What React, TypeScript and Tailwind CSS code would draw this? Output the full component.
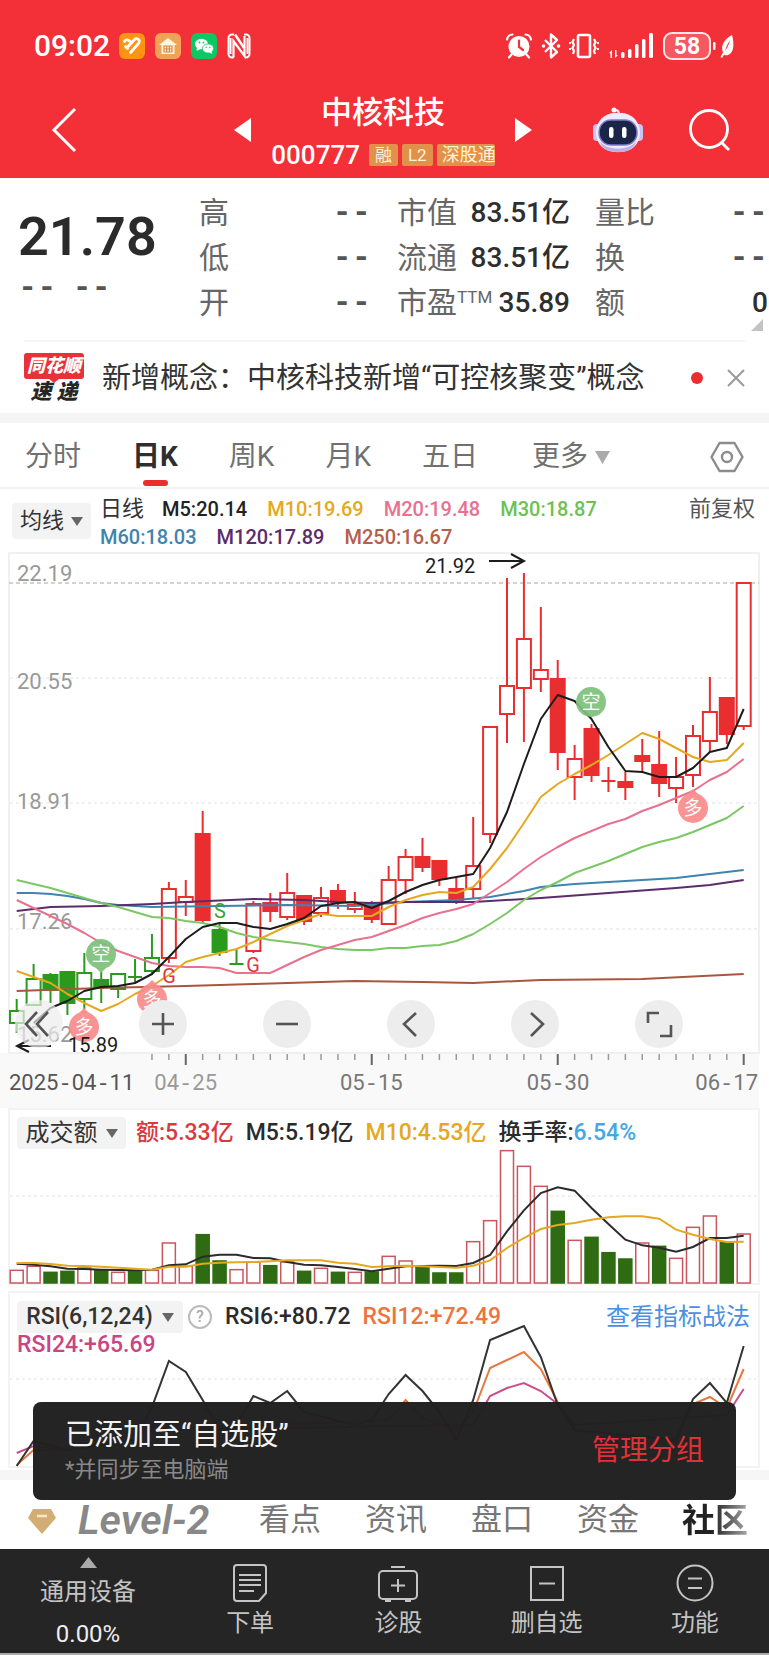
import type { ReactNode } from "react";

const PITCH = 16.907;
const xAt = (i: number) => 16.7 + PITCH * i;

const RED = "#ea2e30";
const GREEN = "#2a9a1c";

type Candle = [kind: string, high: number, top: number, bottom: number, low: number];

// kind: first letter is the colour, second is h(ollow), f(illed) or x (cross)
const candles: Candle[] = [
  ["gh", 999, 1011, 1023, 1033], ["gh", 964, 979, 1005, 1005], ["gf", 973, 975, 990, 1003],
  ["gf", 972, 972, 1003, 1015], ["gh", 953, 973, 999, 1009], ["gf", 972, 980, 987, 1003],
  ["gh", 974, 974, 989, 998], ["gx", 959, 977, 977, 982], ["gh", 934, 958, 971, 975],
  ["rh", 882, 889, 958, 963], ["rh", 880, 897, 902, 916], ["rf", 811, 834, 920, 923],
  ["gf", 923, 930, 952, 956], ["gx", 949, 964, 964, 964], ["rh", 901, 904, 951, 953],
  ["rf", 893, 903, 911, 922], ["rh", 873, 893, 917, 920], ["rf", 896, 896, 921, 925],
  ["rh", 887, 898, 913, 917], ["rf", 884, 891, 902, 909], ["rh", 892, 905, 909, 913],
  ["rf", 901, 903, 919, 923], ["rh", 866, 880, 924, 924], ["rh", 849, 857, 880, 894],
  ["rf", 838, 857, 867, 872], ["rf", 861, 861, 879, 886], ["rf", 877, 889, 901, 904],
  ["rh", 817, 866, 889, 898], ["rh", 727, 727, 834, 843], ["rh", 578, 686, 714, 743],
  ["rh", 573, 639, 688, 742], ["rh", 607, 670, 679, 692], ["rf", 660, 679, 752, 770],
  ["rh", 745, 759, 777, 800], ["rf", 724, 729, 775, 782], ["rx", 767, 781, 781, 792],
  ["rf", 772, 782, 787, 800], ["rf", 739, 756, 761, 772], ["rf", 731, 765, 783, 797],
  ["rh", 757, 777, 788, 803], ["rh", 725, 736, 775, 787], ["rh", 677, 712, 741, 752],
  ["rf", 698, 698, 734, 744], ["rh", 583, 583, 726, 730],
];

const dense = (start: number, ys: number[]): [number, number][] => ys.map((y, k) => [start + k, y]);

const averages: { color: string; points: [number, number][] }[] = [
  { color: "#a9563f", points: [[0, 991], [5, 988], [10, 986], [14, 984], [20, 981], [24, 982], [27, 983], [31, 980], [37, 979], [43, 974]] },
  { color: "#3f84ae", points: [[0, 893], [1, 893], [2, 894], [3, 896], [4, 899], [5, 903], [6, 905], [8, 907], [12, 906], [16, 905], [20, 906], [23, 902], [26, 900], [28, 897], [29, 894], [30, 891], [31, 887], [33, 884], [36, 881], [38, 879], [39, 878], [41, 874], [42, 872], [43, 870]] },
  { color: "#5d2c6b", points: [[0, 911], [2, 907], [5, 906], [8, 904], [10, 902], [14, 899], [17, 900], [19, 902], [21, 903], [23, 902], [25, 902], [27, 902], [31, 898], [35, 893], [39, 888], [41, 885], [43, 880]] },
  { color: "#7cc664", points: dense(0, [880, 884, 888, 893, 898, 903, 907, 912, 917, 918, 921, 923, 927, 933, 937, 940, 942, 944, 947, 949, 950, 950, 948, 948, 946, 945, 941, 934, 924, 913, 900, 890, 882, 873, 867, 861, 854, 847, 842, 838, 832, 825, 818, 806]) },
  { color: "#e8718f", points: dense(0, [900, 908, 916, 924, 933, 943, 951, 957, 963, 966, 967, 967, 968, 973, 973, 973, 965, 957, 950, 945, 940, 937, 931, 925, 918, 913, 909, 904, 893, 882, 869, 857, 847, 838, 831, 824, 819, 811, 805, 798, 791, 780, 772, 759]) },
  { color: "#e5a821", points: dense(0, [971, 977, 983, 994, 1003, 1011, 1004, 994, 986, 975, 962, 957, 953, 949, 942, 934, 926, 920, 914, 916, 916, 916, 907, 900, 895, 892, 893, 887, 869, 848, 823, 797, 784, 774, 765, 755, 744, 733, 739, 748, 757, 762, 760, 743]) },
  { color: "#1c1c1c", points: dense(1, [1023, 1008, 1001, 991, 987, 986, 983, 974, 957, 939, 927, 923, 923, 927, 929, 924, 918, 906, 903, 902, 908, 901, 892, 885, 880, 877, 874, 848, 812, 764, 719, 695, 701, 719, 747, 771, 772, 777, 777, 768, 752, 748, 709]) },
];

const volumes: [string, number][] = [
  ["r", 512], ["r", 500], ["g", 518], ["g", 515], ["r", 505], ["g", 512], ["r", 518], ["g", 515], ["r", 512], ["r", 430], ["r", 500],
  ["g", 405], ["g", 484], ["r", 510], ["r", 487], ["g", 498], ["r", 487], ["g", 515], ["r", 506], ["g", 518], ["r", 518], ["g", 517],
  ["r", 470], ["r", 484], ["g", 502], ["g", 520], ["g", 520], ["r", 426], ["r", 363], ["r", 153], ["r", 200], ["r", 260], ["g", 335],
  ["r", 422], ["g", 413], ["g", 459], ["g", 478], ["r", 430], ["g", 440], ["r", 476], ["r", 383], ["r", 349], ["g", 428], ["r", 403],
];
const volumeM5 = [492, 495, 500, 507, 508, 510, 511, 512, 510, 497, 494, 471, 465, 465, 475, 476, 487, 495, 497, 502, 508, 515, 507, 500, 499, 498, 499, 490, 466, 395, 332, 280, 263, 273, 325, 373, 420, 437, 444, 456, 442, 415, 415, 408];
const volumeM10 = [490, 490, 493, 498, 499, 501, 504, 507, 510, 501, 501, 492, 489, 488, 487, 485, 482, 482, 482, 489, 492, 502, 500, 498, 500, 502, 504, 498, 482, 445, 415, 388, 376, 370, 360, 353, 350, 350, 357, 390, 405, 418, 427, 426];
const volY = (v: number) => (v - 25) / 3;

const rsi: { color: string; points: [number, number][] }[] = [
  { color: "#c94f8c", points: [[0, 1453], [1, 1446], [3, 1450], [8, 1430], [27, 1425], [28, 1396], [29, 1388], [30, 1383], [31, 1391], [32, 1404], [33, 1425], [42, 1415], [43, 1389]] },
  { color: "#e5793f", points: [[0, 1465], [1, 1450], [3, 1450], [8, 1430], [22, 1420], [23, 1400], [24, 1418], [26, 1430], [27, 1412], [28, 1368], [29, 1360], [30, 1352], [31, 1369], [32, 1402], [33, 1430], [39, 1440], [40, 1404], [41, 1397], [42, 1408], [43, 1369]] },
  { color: "#333333", points: [[0, 1466], [1, 1441], [3, 1450], [7, 1440], [8, 1407], [9, 1361], [10, 1372], [11, 1400], [12, 1430], [13, 1425], [14, 1396], [15, 1403], [16, 1391], [17, 1412], [20, 1425], [21, 1420], [22, 1394], [23, 1375], [24, 1391], [25, 1412], [26, 1440], [27, 1400], [28, 1340], [29, 1333], [30, 1326], [31, 1357], [32, 1405], [33, 1430], [39, 1440], [40, 1399], [41, 1383], [42, 1403], [43, 1346]] },
];

const toPoints = (pts: [number, number][]) => pts.map(([i, y]) => `${xAt(i).toFixed(1)},${y}`).join(" ");

function Dashed({ children }: { children: string }) {
  return (
    <>
      {children.split(/(-)/).map((part, i) =>
        part === "-" ? <span key={i} className="font-['Liberation_Mono']">-</span> : part,
      )}
    </>
  );
}

function StatusBar() {
  return (
    <div className="flex h-[92px] items-center pr-[34px] pl-[34px] text-white">
      <span className="text-[30px] leading-none font-medium">09:02</span>
      <div className="ml-[9px] flex items-center gap-[10px]">
        <svg width="26" height="26" viewBox="0 0 26 26">
          <rect width="26" height="26" rx="6" fill="#ff9413" />
          <path d="M5.500 8.500a3 3 0 0 1 4.500-1l2.500 2.500M6.500 13.500l2 2M11.500 19.500l8-9a2.800 2.800 0 0 0-4-4l-7 7.500" fill="none" stroke="#fff" strokeWidth="2.800" strokeLinecap="round" />
        </svg>
        <svg width="26" height="26" viewBox="0 0 26 26">
          <rect width="26" height="26" rx="6" fill="#f0a354" />
          <path d="M13 5l9 7h-2.500v9h-13v-9H4z" fill="#fff5e0" />
          <path d="M9 13h8v6H9zM11.700 13v6M14.400 13v6M9 16h8" fill="none" stroke="#d9893c" strokeWidth="1.200" />
        </svg>
        <svg width="26" height="26" viewBox="0 0 26 26">
          <rect width="26" height="26" rx="6" fill="#0cc863" />
          <ellipse cx="10.500" cy="11" rx="6.500" ry="5.300" fill="#fff" />
          <path d="M6 14l-.5 4 4-2z" fill="#fff" />
          <ellipse cx="17" cy="15.500" rx="5.600" ry="4.600" fill="#fff" stroke="#0cc863" strokeWidth=".8" />
          <path d="M18 19l3 2-.5-3z" fill="#fff" />
          <g fill="#0cc863"><circle cx="8.500" cy="9.500" r=".9" /><circle cx="12.500" cy="9.500" r=".9" /><circle cx="15.200" cy="14.500" r=".7" /><circle cx="18.800" cy="14.500" r=".7" /></g>
        </svg>
        <svg width="24" height="26" viewBox="0 0 24 26" fill="none" stroke="#fff">
          <path d="M7 1.500H5a3.500 3.500 0 0 0-3.500 3.500v16A3.500 3.500 0 0 0 5 24.500h1.500M17 1.500h2A3.500 3.500 0 0 1 22.500 5v16a3.500 3.500 0 0 1-3.500 3.500h-1" strokeWidth="2" />
          <path d="M6.500 24.500V8l11 15V3" strokeWidth="2.200" />
          <path d="M8 1.500l9.500 14" strokeWidth="2.500" />
          <path d="M3.500 5v16M20.500 5v16" strokeWidth="2" />
        </svg>
      </div>
      <div className="ml-auto flex items-center">
        <svg width="28" height="28" viewBox="0 0 28 28">
          <circle cx="14" cy="14.500" r="10.500" fill="#fff" />
          <path d="M14 8.500v6.500l4 3" fill="none" stroke="#f32f38" strokeWidth="2.200" strokeLinecap="round" />
          <path d="M2 7.500C2.500 4.500 5 2.500 7.500 2.500M26 7.500C25.500 4.500 23 2.500 20.500 2.500M6.500 22.500L4 25.500M21.500 22.500l2.500 3" fill="none" stroke="#fff" strokeWidth="2.200" strokeLinecap="round" />
        </svg>
        <svg className="ml-2" width="20" height="28" viewBox="0 0 20 28">
          <path d="M4 8l12 12-6 5.500V2.500L16 8 4 20" fill="none" stroke="#fff" strokeWidth="2.400" strokeLinejoin="round" />
          <circle cx="2.500" cy="14" r="1.800" fill="#fff" /><circle cx="17.500" cy="14" r="1.800" fill="#fff" />
        </svg>
        <svg className="ml-2" width="30" height="28" viewBox="0 0 30 28" fill="none" stroke="#fff" strokeWidth="2.200">
          <rect x="9" y="3" width="12" height="22" rx="1.500" strokeWidth="2.600" />
          <path d="M5 7l-1.500 3L5 13l-1.500 3L5 19l-1 3M25 7l1.500 3L25 13l1.500 3L25 19l1 3M1 10v2M1 16v2M29 10v2M29 16v2" />
        </svg>
        <svg className="ml-[10px]" width="46" height="28" viewBox="0 0 46 28" fill="#fff">
          <path d="M0 21l3-3v8H1.500v-4.500zM6 18v8l3-3H7.500v-5z" />
          <rect x="12" y="20" width="3.500" height="6" rx="1.500" /><rect x="19" y="17" width="3.500" height="9" rx="1.500" /><rect x="26" y="12" width="3.500" height="14" rx="1.500" /><rect x="33" y="7" width="3.500" height="19" rx="1.500" /><rect x="40" y="1" width="4" height="25" rx="1.500" />
        </svg>
        <span className="ml-2 flex h-7 w-12 items-center justify-center rounded-[9px] border-2 border-white/85 bg-white/20 text-[23px] leading-none font-bold">58</span>
        <svg className="ml-[2px]" width="22" height="28" viewBox="0 0 22 28" fill="#fff">
          <rect x="0" y="10" width="2.500" height="8" rx="1.200" />
          <path d="M19 3c2.500 9 2 18-4 20-1.500.5-3 .3-4-.3L9 26l-1.500-1L10 20.500C7 13 12 7 19 3zM12 19c1.500-5 3-8 5-10.500-1 3.500-2.500 7-5 10.500z" fillRule="evenodd" />
        </svg>
      </div>
    </div>
  );
}

function Tag({ children }: { children: string }) {
  return <span className="rounded-[2px] bg-[#e2914a] px-[6px] py-px text-[17px] leading-5 text-[#fff3d9]">{children}</span>;
}

function TitleBar() {
  return (
    <div className="flex h-[86px] items-center pr-[38px] pb-[11px] pl-[50px] text-white">
      <button aria-label="返回">
        <svg width="28" height="46" viewBox="0 0 28 46" fill="none" stroke="#fff" strokeWidth="3"><path d="M25 2L4 23l21 21" /></svg>
      </button>
      <button aria-label="上一只" className="ml-[156px]">
        <svg width="17" height="24" viewBox="0 0 17 24"><path d="M17 0v24L0 12z" fill="#fff" /></svg>
      </button>
      <div className="flex flex-1 flex-col items-center pt-1">
        <h1 className="text-[31px] leading-9 font-medium">中核科技</h1>
        <div className="mt-[10px] flex items-center gap-1 whitespace-nowrap">
          <span className="mr-[5px] text-[26px] leading-7 font-medium">000777</span>
          <Tag>融</Tag>
          <Tag>L2</Tag>
          <span className="w-[58px] overflow-hidden rounded-[2px] bg-[#e2914a] py-px pl-[5px] text-[18px] leading-5 text-[#fff3d9]">深股通</span>
        </div>
      </div>
      <button aria-label="下一只">
        <svg width="17" height="24" viewBox="0 0 17 24"><path d="M0 0v24l17-12z" fill="#fff" /></svg>
      </button>
      <button aria-label="智能助手" className="ml-[61px]">
        <svg width="50" height="46" viewBox="0 0 50 46">
          <path d="M26 8c0-4-1-5-4-5" fill="none" stroke="#e9d9ff" strokeWidth="2.500" /><circle cx="21" cy="3" r="2.500" fill="#fff" />
          <rect x="0" y="17" width="8" height="17" rx="4" fill="#c9c4f3" /><rect x="42" y="17" width="8" height="17" rx="4" fill="#c9c4f3" />
          <rect x="3" y="6" width="44" height="39" rx="19" fill="#eeeaff" />
          <path d="M7 34c5 10 31 10 36 0-2 15-34 15-36 0z" fill="#b9b2ea" />
          <rect x="6" y="13" width="38" height="25" rx="12" fill="#1a2547" stroke="#7d7cc4" strokeWidth="1.500" />
          <rect x="16" y="20" width="4.500" height="11" rx="2.200" fill="#fff" /><rect x="29" y="20" width="4.500" height="11" rx="2.200" fill="#fff" />
        </svg>
      </button>
      <button aria-label="搜索" className="ml-[46px]">
        <svg width="42" height="44" viewBox="0 0 42 44" fill="none" stroke="#fff" strokeWidth="2.800"><circle cx="20" cy="21" r="18.500" /><path d="M32 34l8 8" /></svg>
      </button>
    </div>
  );
}

function StatRow({ label, children }: { label: ReactNode; children: string }) {
  return (
    <div className="flex h-[43px] items-center justify-between whitespace-nowrap">
      <dt className="text-[30px] text-[#666]">{label}</dt>
      {children === "--"
        ? <dd className="font-['Liberation_Mono'] text-[32px] font-bold text-[#555]">--</dd>
        : <dd className="text-[28px] font-medium text-[#2e2e2e]">{children}</dd>}
    </div>
  );
}

function Quote() {
  return (
    <section className="relative flex h-[162px] pt-[13px] leading-[43px]">
      <div className="w-[199px] shrink-0 pl-[18px]">
        <p className="mt-[18px] text-[54px] leading-[56px] font-semibold text-[#2b2b2b]">21.78</p>
        <p className="flex gap-4 font-['Liberation_Mono'] text-[32px] leading-[46px] font-bold text-[#555]">
          <span>--</span>
          <span>--</span>
        </p>
      </div>
      <dl className="flex w-[172px] shrink-0 flex-col gap-[2px]">
        <StatRow label="高">--</StatRow>
        <StatRow label="低">--</StatRow>
        <StatRow label="开">--</StatRow>
      </dl>
      <dl className="ml-[26px] flex w-[173px] shrink-0 flex-col gap-[2px]">
        <StatRow label="市值">83.51亿</StatRow>
        <StatRow label="流通">83.51亿</StatRow>
        <StatRow label={<span className="flex">市盈<sup className="top-0 text-[17px] leading-8">TTM</sup></span>}>35.89</StatRow>
      </dl>
      <dl className="ml-[25px] flex flex-1 flex-col gap-[2px] pr-px">
        <StatRow label="量比">--</StatRow>
        <StatRow label="换">--</StatRow>
        <StatRow label="额">0</StatRow>
      </dl>
      <svg className="absolute right-[6px] bottom-[9px]" width="12" height="12" viewBox="0 0 12 12"><path d="M12 0v12H0z" fill="#c4c4c4" /></svg>
    </section>
  );
}

function News() {
  return (
    <section className="mx-6 flex h-[73px] items-center border-t-2 border-[#f5f5f5]">
      <div className="w-[60px] text-center leading-none font-black italic">
        <div className="relative rounded-[3px] bg-[#e63238] py-[3px] text-[18px] leading-5 whitespace-nowrap text-white">
          同花顺
          <svg className="absolute -bottom-1 left-6" width="12" height="5" viewBox="0 0 12 5"><path d="M0 0h12L6 5z" fill="#e63238" /></svg>
        </div>
        <div className="mt-[3px] text-[21px] leading-[21px] text-[#262626]">速 递</div>
      </div>
      <a href="#news" className="ml-[18px] flex-1 pt-[2px] text-[29px] whitespace-nowrap text-[#333]">新增概念：中核科技新增“可控核聚变”概念</a>
      <span className="size-3 rounded-full bg-[#ea2e30]" />
      <button aria-label="关闭" className="ml-6">
        <svg width="18" height="18" viewBox="0 0 18 18" stroke="#999" strokeWidth="2"><path d="M1 1l16 16M17 1L1 17" /></svg>
      </button>
    </section>
  );
}

function PeriodTabs() {
  return (
    <nav className="flex h-[66px] items-center border-b-2 border-[#f3f3f3] pt-1 pr-[25px] pl-[25px] text-[28px] text-[#707070]">
      <button>分时</button>
      <button className="relative ml-[51px] font-bold text-[#2e2e2e]">
        日K
        <span className="absolute -bottom-[8px] left-[11px] h-[6px] w-[25px] rounded-[3px] bg-[#ea2e30]" />
      </button>
      <button className="ml-[51px]">周K</button>
      <button className="ml-[51px]">月K</button>
      <button className="ml-[51px]">五日</button>
      <button className="ml-[54px] flex items-center gap-[7px]">
        更多
        <svg width="15" height="13" viewBox="0 0 15 13"><path d="M0 0h15L7.500 13z" fill="#aaa" /></svg>
      </button>
      <button aria-label="设置" className="ml-auto">
        <svg width="34" height="32" viewBox="0 0 34 32" fill="none" stroke="#8c8c8c" strokeWidth="2.400" strokeLinejoin="round">
          <path d="M9.500 2h15L32.500 16l-8 14h-15l-8-14z" /><circle cx="17" cy="16" r="5" />
        </svg>
      </button>
    </nav>
  );
}

function Caret() {
  return <svg width="12" height="9" viewBox="0 0 12 9"><path d="M0 0h12L6 9z" fill="#666" /></svg>;
}

function AverageLegend() {
  return (
    <div className="flex h-[63px] pr-[14px] pl-3 text-[20px] leading-7 font-medium whitespace-nowrap">
      <button className="mt-[14px] flex h-9 w-[79px] items-center justify-center gap-[7px] rounded bg-[#f3f3f3] text-[22px] font-normal text-[#333]">均线<Caret /></button>
      <div className="ml-[9px] pt-[6px]">
        <div className="flex gap-5">
          <span className="-mr-[2px] text-[22px] font-normal text-[#333]">日线</span>
          <span className="text-[#222]">M5:20.14</span>
          <span className="text-[#e5a821]">M10:19.69</span>
          <span className="text-[#e8718f]">M20:19.48</span>
          <span className="text-[#6cc24f]">M30:18.87</span>
        </div>
        <div className="flex gap-5">
          <span className="text-[#3f84ae]">M60:18.03</span>
          <span className="text-[#5d2c6b]">M120:17.89</span>
          <span className="text-[#b5604a]">M250:16.67</span>
        </div>
      </div>
      <button className="ml-auto flex pt-[6px] text-[22px] font-normal text-[#555]">前复权</button>
    </div>
  );
}

function CandleMark({ index, candle }: { index: number; candle: Candle }) {
  const [kind, high, top, bottom, low] = candle;
  const x = xAt(index);
  const color = kind[0] === "r" ? RED : GREEN;
  const left = Math.max(x - 7, 10);
  return (
    <g stroke={color} strokeWidth="2">
      {high < top && <path d={`M${x} ${high}V${top}`} />}
      {low > bottom && <path d={`M${x} ${bottom}V${low}`} />}
      {kind[1] === "x" ? (
        <path d={`M${x - 7} ${top}h14`} />
      ) : (
        <rect x={left} y={top} width={x + 7 - left} height={bottom - top} fill={kind[1] === "f" ? color : "#fff"} />
      )}
    </g>
  );
}

function Signal({ x, y, label, tip = 0 }: { x: number; y: number; label: string; tip?: number }) {
  const color = label === "空" ? "#7cc07a" : "#fa8a8a";
  return (
    <g>
      <g fill={color} fillOpacity=".92">
        <circle cx={x} cy={y} r="15" />
        {tip !== 0 && <path d={`M${x - 5} ${y + tip * 14}L${x} ${y + tip * 19}L${x + 5} ${y + tip * 14}z`} />}
      </g>
      <text x={x} y={y + 7} textAnchor="middle" fontSize="19" fill="#fff">{label}</text>
    </g>
  );
}

const axisLabels: [string, number][] = [["22.19", 581], ["20.55", 689], ["18.91", 809], ["17.26", 929], ["15.62", 1042]];

function RoundButton({ label, children, faded }: { label: string; children: ReactNode; faded?: boolean }) {
  return (
    <button aria-label={label} className={faded ? "size-12 rounded-full bg-[#ededed]/70" : "size-12 rounded-full bg-[#ededed]"}>
      <svg width="48" height="48" viewBox="0 0 48 48" fill="none" stroke="#555" strokeWidth="2.600">{children}</svg>
    </button>
  );
}

function PriceChart() {
  return (
    <section className="relative">
      <svg className="block h-auto w-full" viewBox="0 552 769 556">
        <rect x="0" y="1053" width="759" height="55" fill="#f9f9f9" />
        <rect x="9" y="553" width="750" height="500" fill="#fff" stroke="#f0f0f0" strokeWidth="2" />
        <g stroke="#ececec" strokeWidth="1.500" strokeDasharray="3 3"><path d="M10 678H758M10 803H758M10 929H758" /></g>
        <path d="M9 583H759" stroke="#c6c6b4" strokeWidth="1.500" strokeDasharray="4 3" />
        <g fontSize="22" fill="#999">{axisLabels.map(([t, y]) => <text key={t} x="17" y={y}>{t}</text>)}</g>
        {candles.map((c, i) => <CandleMark key={i} index={i} candle={c} />)}
        {averages.map((line) => <polyline key={line.color} points={toPoints(line.points)} fill="none" stroke={line.color} strokeWidth="2" strokeLinejoin="round" />)}
        <Signal x={101} y={954} label="空" tip={1} />
        <Signal x={591} y={702} label="空" />
        <Signal x={84} y={1027} label="多" tip={-1} />
        <Signal x={152} y={999} label="多" tip={-1} />
        <Signal x={693} y={808} label="多" tip={-1} />
        <g fontSize="20" textAnchor="middle">
          <text x="220" y="918" fill="#3f9f35">S</text>
          <text x="169" y="983" fill="#d93a3f">G</text>
          <text x="253" y="972" fill="#d93a3f">G</text>
        </g>
        <g fontSize="20" fill="#1c1c1c">
          <text x="425" y="573">21.92</text>
          <text x="68" y="1052">15.89</text>
        </g>
        <g fill="none" stroke="#1c1c1c" strokeWidth="2"><path d="M489 561h34M511 554l13 7-13 7" /><path d="M51 1046H18M29 1040l-12 6 12 6" /></g>
        <g stroke="#999" strokeWidth="1.500">
          {candles.map((_, i) => i >= 8 && (i % 11 === 10
            ? <path key={i} d={`M${xAt(i)} 1054v11`} stroke="#666" strokeWidth="2" />
            : <path key={i} d={`M${xAt(i)} 1054v6`} />))}
        </g>
      </svg>
      <div className="absolute top-[448px] left-[15px] flex gap-[76px]">
        <RoundButton label="收起" faded><path d="M22 12L11 24l11 12M33 12L22 24l11 12" /></RoundButton>
        <RoundButton label="放大"><path d="M13 24h22M24 13v22" /></RoundButton>
        <RoundButton label="缩小"><path d="M13 24h22" /></RoundButton>
        <RoundButton label="左移"><path d="M29 13L17 24l12 12" /></RoundButton>
        <RoundButton label="右移"><path d="M20 13l12 11-12 12" /></RoundButton>
        <RoundButton label="全屏"><path d="M13 23V13h11M25 36h11V25" /></RoundButton>
      </div>
      <div className="absolute right-[11px] bottom-2 left-[9px] flex text-[22px] leading-[30px] text-[#777]">
        <span className="text-[#555]"><Dashed>2025-04-11</Dashed></span>
        <span className="ml-5 text-[#999]"><Dashed>04-25</Dashed></span>
        <span className="ml-auto"><Dashed>05-15</Dashed></span>
        <span className="mr-[106px] ml-[124px]"><Dashed>05-30</Dashed></span>
        <span><Dashed>06-17</Dashed></span>
      </div>
    </section>
  );
}

function VolumePanel() {
  return (
    <section className="relative">
      <svg className="block h-auto w-full" viewBox="0 0 769 183">
        <rect x="9" y="1" width="750" height="175" fill="#fff" stroke="#f3f3f3" strokeWidth="2" />
        <path d="M10 88H758" stroke="#ececec" strokeWidth="1.500" strokeDasharray="3 3" />
        {volumes.map(([kind, v], i) => (
          <rect key={i} x={xAt(i) - 6.500} y={volY(v)} width="13" height={175 - volY(v)} fill={kind === "g" ? "#2f6b12" : "#fff"} stroke={kind === "g" ? "#2f6b12" : "#c9565c"} strokeWidth="1.500" />
        ))}
        <polyline points={toPoints(dense(0, volumeM5.map(volY)))} fill="none" stroke="#2b2b2b" strokeWidth="2" />
        <polyline points={toPoints(dense(0, volumeM10.map(volY)))} fill="none" stroke="#e5a821" strokeWidth="2" />
      </svg>
      <div className="absolute top-[9px] left-[17px] flex h-8 items-center gap-3 text-[23px] leading-8 font-medium whitespace-nowrap">
        <button className="-mr-[2px] flex h-8 w-[109px] items-center justify-center gap-2 rounded bg-[#f3f3f3] text-[24px] font-normal text-[#333]">成交额<Caret /></button>
        <span className="text-[#d93a3f]">额:5.33亿</span>
        <span className="text-[#2b2b2b]">M5:5.19亿</span>
        <span className="text-[#e5a821]">M10:4.53亿</span>
        <span className="text-[#2b2b2b]">换手率:<span className="text-[#46a8e0]">6.54%</span></span>
      </div>
    </section>
  );
}

function RsiPanel() {
  return (
    <section className="relative">
      <svg className="block h-auto w-full" viewBox="0 1291 769 179">
        <rect x="9" y="1292" width="750" height="175" fill="#fff" stroke="#f3f3f3" strokeWidth="2" />
        <path d="M10 1379H758" stroke="#ececec" strokeWidth="1.500" strokeDasharray="3 3" />
        {rsi.map((line) => <polyline key={line.color} points={toPoints(line.points)} fill="none" stroke={line.color} strokeWidth="2" />)}
      </svg>
      <div className="absolute top-[10px] right-[19px] left-[17px] flex h-8 items-center text-[23px] leading-8 font-medium whitespace-nowrap text-[#2b2b2b]">
        <button className="flex h-8 w-[166px] items-center justify-center gap-[9px] rounded bg-[#f3f3f3] font-medium text-[#333]">RSI(6,12,24)<Caret /></button>
        <button aria-label="指标说明" className="ml-[5px] flex size-6 items-center justify-center rounded-full border-2 border-[#bbb] text-[16px] leading-none text-[#aaa]">?</button>
        <span className="ml-[13px]">RSI6:+80.72</span>
        <span className="ml-[12px] text-[#ec7440]">RSI12:+72.49</span>
        <a href="#guide" className="ml-auto text-[24px] font-normal text-[#4a8fe0]">查看指标战法</a>
      </div>
      <span className="absolute top-[38px] left-[17px] text-[23px] leading-8 font-medium text-[#c94583]">RSI24:+65.69</span>
    </section>
  );
}

function InfoTabs() {
  return (
    <nav className="flex h-[69px] items-center pt-3 pr-[21px] pl-7 text-[31px] whitespace-nowrap text-[#777]">
      <svg width="28" height="26" viewBox="0 0 28 26"><path d="M5 1h18l5 9-14 16L0 10z" fill="#d3ae74" /><path d="M9 8h10" stroke="#f7e6c4" strokeWidth="2.500" /></svg>
      <button className="ml-[22px] text-[41px] leading-[45px] font-semibold text-[#888] italic">Level-2</button>
      <div className="ml-auto flex gap-[44px]">
        <button>看点</button>
        <button>资讯</button>
        <button>盘口</button>
        <button>资金</button>
        <button className="-ml-px bg-linear-to-r from-[#222] from-45% to-[#aaa] bg-clip-text text-[33px] leading-[45px] font-bold text-transparent">社区</button>
      </div>
    </nav>
  );
}

function NavItem({ label, children }: { label: string; children: ReactNode }) {
  return (
    <button className="flex flex-1 flex-col items-center pt-[14px]">
      <svg width="42" height="40" viewBox="0 0 42 40" fill="none" stroke="#c4c4c4" strokeWidth="2">{children}</svg>
      <span className="mt-1 text-[24px] leading-8">{label}</span>
    </button>
  );
}

function BottomNav() {
  return (
    <nav className="flex h-[106px] border-b-2 border-[#aaa] bg-[#252525] text-[#c4c4c4]">
      <button className="flex w-[176px] flex-col items-center pt-2">
        <svg width="17" height="11" viewBox="0 0 17 11"><path d="M8.500 0L17 11H0z" fill="#aaa" /></svg>
        <span className="mt-2 text-[24px] leading-8">通用设备</span>
        <span className="mt-[10px] text-[24px] leading-8 text-[#eee]">0.00%</span>
      </button>
      <NavItem label="下单"><path d="M8 2h26a3 3 0 0 1 3 3v25l-7 8H8a3 3 0 0 1-3-3V5a3 3 0 0 1 3-3zM10 12h22M10 17h22M10 22h22M10 28h15" /></NavItem>
      <NavItem label="诊股"><rect x="2" y="8" width="38" height="28" rx="4" /><path d="M14 4h14M8 38h6M28 38h6M21 16v13M14 22.500h14" /></NavItem>
      <NavItem label="删自选"><path d="M5 4h32v33H5zM13 20.500h16" /></NavItem>
      <NavItem label="功能"><circle cx="21" cy="20" r="17.500" /><path d="M14 15.500h14M14 25h14" /></NavItem>
    </nav>
  );
}

function Toast() {
  return (
    <div role="status" className="absolute inset-x-[33px] bottom-[155px] flex h-[98px] items-center justify-between rounded-lg bg-[#202020]/98 px-8 whitespace-nowrap">
      <div>
        <p className="text-[29px] leading-[38px] text-[#f2f2f2]">已添加至“自选股”</p>
        <p className="text-[22px] leading-8 text-[#888]">*并同步至电脑端</p>
      </div>
      <button className="text-[28px] text-[#e03236]">管理分组</button>
    </div>
  );
}

export default function App() {
  return (
    <main className="relative w-full overflow-hidden bg-white font-['Roboto','Noto_Sans_CJK_SC',sans-serif]">
      <header className="bg-[#f32f38]">
        <StatusBar />
        <TitleBar />
      </header>
      <Quote />
      <News />
      <div className="h-[10px] bg-[#f5f5f5]" />
      <PeriodTabs />
      <AverageLegend />
      <PriceChart />
      <VolumePanel />
      <RsiPanel />
      <div className="h-[10px] bg-[#f6f6f6]" />
      <InfoTabs />
      <BottomNav />
      <Toast />
    </main>
  );
}
